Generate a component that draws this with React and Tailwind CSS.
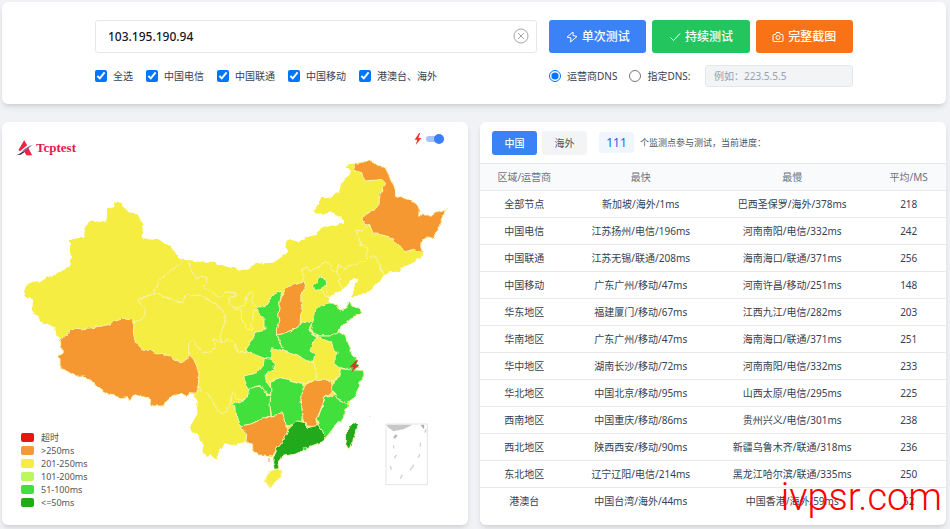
import { useState } from 'react';

const BORDER = '#f8f3b0';
const YELLOW = '#f6ed42';
const ORANGE = '#f69833';
const GREEN = '#42e03c';
const DARK = '#23a91a';

const rows = [
  ['全部节点', '新加坡/海外/1ms', '巴西圣保罗/海外/378ms', 218],
  ['中国电信', '江苏扬州/电信/196ms', '河南南阳/电信/332ms', 242],
  ['中国联通', '江苏无锡/联通/208ms', '海南海口/联通/371ms', 256],
  ['中国移动', '广东广州/移动/47ms', '河南许昌/移动/251ms', 148],
  ['华东地区', '福建厦门/移动/67ms', '江西九江/电信/282ms', 203],
  ['华南地区', '广东广州/移动/47ms', '海南海口/联通/371ms', 251],
  ['华中地区', '湖南长沙/移动/72ms', '河南南阳/电信/332ms', 233],
  ['华北地区', '中国北京/移动/95ms', '山西太原/电信/295ms', 225],
  ['西南地区', '中国重庆/移动/86ms', '贵州兴义/电信/301ms', 238],
  ['西北地区', '陕西西安/移动/90ms', '新疆乌鲁木齐/联通/318ms', 236],
  ['东北地区', '辽宁辽阳/电信/214ms', '黑龙江哈尔滨/联通/335ms', 250],
  ['港澳台', '中国台湾/海外/44ms', '中国香港/海外/59ms', 52],
];

const legend = [
  { label: '超时', color: 'bg-[#e8160f]' },
  { label: '>250ms', color: 'bg-[#f69833]' },
  { label: '201-250ms', color: 'bg-[#f6ed42]' },
  { label: '101-200ms', color: 'bg-[#bdf75c]' },
  { label: '51-100ms', color: 'bg-[#42e03c]' },
  { label: '<=50ms', color: 'bg-[#23a91a]' },
];

const carriers = ['全选', '中国电信', '中国联通', '中国移动', '港澳台、海外'];

const mainland =
  '343,607 365,607 367,620 388,639 412,643 418,657 430,670 427,690 425,713 440,719 480,723 500,735 520,745 527,763 542,781 570,783 600,787 640,787 655,793 680,802 700,806 715,815 735,810 770,793 820,790 840,777 865,757 857,740 858,725 868,720 895,727 912,723 915,715 948,707 962,690 990,680 1028,673 1030,663 1015,648 995,638 980,643 945,642 942,635 958,607 965,590 980,597 1017,581 1022,560 1035,538 1050,525 1052,515 1040,508 1037,503 1050,495 1067,492 1105,485 1120,490 1130,498 1152,500 1162,517 1175,545 1187,570 1190,592 1205,595 1235,603 1252,617 1258,630 1256,647 1295,647 1310,638 1340,628 1330,645 1315,690 1302,718 1285,713 1265,723 1262,740 1267,760 1263,778 1250,777 1243,787 1230,795 1205,805 1200,818 1185,817 1170,815 1155,830 1130,853 1110,868 1095,885 1080,886 1060,895 1053,892 1062,875 1062,865 1075,842 1070,835 1057,837 1040,860 1025,870 1015,880 995,885 987,892 990,910 1012,913 1020,935 1035,930 1050,905 1055,920 1085,928 1087,945 1060,952 1040,970 1022,985 1017,998 1035,1010 1042,1025 1052,1048 1055,1065 1072,1085 1075,1100 1065,1112 1090,1113 1092,1128 1080,1150 1075,1170 1065,1192 1050,1205 1045,1220 1035,1240 1025,1265 1005,1280 990,1300 975,1318 960,1330 940,1338 920,1345 905,1355 885,1365 855,1370 840,1380 833,1390 837,1405 823,1407 818,1390 820,1372 800,1368 775,1367 758,1355 758,1335 738,1327 710,1335 690,1338 670,1335 655,1360 652,1377 640,1375 632,1365 620,1370 610,1355 607,1335 600,1325 592,1298 572,1300 572,1280 583,1260 592,1245 592,1200 583,1190 570,1180 560,1195 545,1185 520,1188 500,1205 485,1220 457,1220 450,1200 430,1192 410,1185 398,1190 388,1210 385,1192 360,1195 330,1187 310,1175 290,1162 280,1150 250,1130 225,1130 200,1115 180,1100 180,1078 172,1068 187,1060 185,1045 177,1025 185,1012 170,1010 165,985 145,975 120,965 115,950 95,940 105,942 98,935 98,900 80,895 72,880 78,860 110,845 118,850 140,835 175,820 208,803 210,785 217,775 213,755 213,730 205,723 240,713 255,715 252,705 260,675 265,662 300,668 320,663 322,630 343,623';

// Borders between provinces that share the same colour
const borders = [
  '545,785 525,808 510,815 495,832 475,842 468,865 458,885 415,900 420,913 432,925 435,945 428,960 402,968',
  '458,885 480,883 495,893 510,900 545,910 557,885 575,890 600,887 620,900 650,917 668,935 678,970 660,1015 665,1030 637,1020 650,1040 635,1060 610,1058 590,1038 580,1022 567,1030 565,1055 568,1067',
  '565,788 572,810 590,840 605,830 620,835 620,850 607,860 640,880 655,895 680,878 705,880 705,890 690,895 690,915 705,927 735,920 740,890 755,877 760,890 753,905 775,920',
  '705,927 724,935 728,960 740,985 755,995 762,985',
  '775,930 760,935 762,955 748,975 755,995',
  '660,1015 670,1030 680,1018 700,1027 705,1042 710,1058 740,1060',
  '595,1160 605,1180 610,1170 625,1185 640,1205 650,1230 665,1243 680,1235 690,1205 700,1175 708,1182 710,1200 735,1200',
  '908,842 910,805 922,802 927,815 952,805 980,788 990,797 990,810 1010,820 1018,795 1030,810 1065,793 1102,780 1100,745 1080,738 1077,715 1068,693 1090,695 1100,683',
  '1102,780 1118,767 1130,775 1135,790 1150,832',
  '1010,820 1025,840 1014,842 1025,868',
  '967,868 980,857 980,875 987,892 970,890 967,868',
  '815,1110 795,1125 812,1145 840,1135 865,1140 908,1152 940,1145 950,1130 945,1105 940,1085 925,1088',
  '940,1145 965,1143 990,1142 1000,1145 1015,1135 1022,1110',
];

const provinces = [
  { name: 'tibet', color: ORANGE, points: '185,1012 200,1005 212,988 250,988 290,983 330,975 335,968 370,958 395,962 402,975 400,1000 405,1025 425,1048 460,1057 490,1067 515,1070 520,1082 545,1087 560,1080 568,1067 580,1078 590,1100 597,1120 595,1155 588,1182 570,1180 560,1195 545,1185 520,1188 500,1205 485,1220 457,1220 450,1200 430,1192 410,1185 398,1190 388,1210 385,1192 360,1195 330,1187 310,1175 290,1162 280,1150 250,1130 225,1130 200,1115 180,1100 180,1078 172,1068 187,1060 185,1045 177,1025' },
  { name: 'heilongjiang', color: ORANGE, points: '1067,492 1105,485 1120,490 1130,498 1152,500 1162,517 1175,545 1187,570 1190,592 1205,595 1235,603 1252,617 1258,630 1256,647 1295,647 1310,638 1340,628 1330,645 1315,690 1302,718 1285,713 1265,723 1262,740 1267,760 1240,750 1217,757 1205,742 1187,735 1180,718 1150,707 1120,703 1110,680 1097,675 1087,657 1105,638 1125,630 1137,615 1140,585 1157,552 1145,540 1130,542 1095,545 1085,520 1060,512' },
  { name: 'beijing', color: GREEN, points: '938,858 952,845 955,835 965,832 975,842 977,855 967,868 940,870' },
  { name: 'shaanxi', color: GREEN, points: '845,875 825,883 808,902 795,922 772,923 775,940 795,960 795,992 765,1000 760,1015 752,1030 738,1050 742,1058 775,1070 793,1077 815,1080 815,1045 850,1055 835,1015 832,1000 840,965 835,940' },
  { name: 'henan', color: GREEN, points: '832,1007 885,990 902,972 905,965 938,970 925,995 955,1012 940,1025 930,1055 945,1065 940,1085 925,1088 905,1075 880,1065 850,1055' },
  { name: 'shanxi', color: ORANGE, points: '855,870 870,857 912,845 917,860 903,885 902,905 907,930 902,950 900,975 885,990 832,1007 832,990 840,965 835,940 838,920 845,890' },
  { name: 'shandong', color: GREEN, points: '988,911 965,917 947,933 945,945 938,970 930,995 960,1010 990,1010 1017,998 1022,985 1040,970 1060,952 1087,945 1085,928 1055,920 1050,905 1035,930 1020,935 1012,913' },
  { name: 'jiangsu', color: GREEN, points: '955,1010 990,1010 1017,998 1035,1010 1042,1025 1052,1048 1055,1065 1072,1085 1075,1105 1060,1112 1040,1110 1020,1105 1002,1090 1003,1080 1015,1060 1002,1055 995,1030 970,1020' },
  { name: 'zhejiang', color: GREEN, points: '1022,1108 1040,1110 1060,1112 1090,1113 1092,1128 1080,1150 1075,1170 1065,1192 1050,1205 1040,1210 1015,1200 1005,1185 995,1165 1000,1145 1015,1135' },
  { name: 'fujian', color: GREEN, points: '1005,1185 1015,1200 1040,1210 1045,1220 1035,1240 1025,1265 1005,1280 990,1300 975,1318 968,1300 955,1280 952,1260 965,1225 975,1195' },
  { name: 'jiangxi', color: ORANGE, points: '912,1160 940,1145 965,1143 990,1142 997,1175 975,1195 962,1230 952,1260 945,1282 918,1280 910,1255 905,1225 902,1190 910,1182' },
  { name: 'hunan', color: GREEN, points: '812,1145 840,1135 865,1140 895,1150 908,1152 910,1182 902,1190 905,1225 910,1258 885,1275 855,1280 850,1260 848,1240 815,1250 810,1220 812,1190' },
  { name: 'guizhou', color: GREEN, points: '695,1215 735,1200 745,1180 750,1165 785,1160 800,1185 812,1190 810,1220 813,1248 785,1260 750,1275 720,1280 710,1255 708,1225' },
  { name: 'chongqing', color: GREEN, points: '815,1080 793,1077 790,1095 770,1120 732,1130 735,1155 745,1170 780,1158 800,1182 812,1188 812,1165 798,1145 795,1125 825,1110 820,1090' },
  { name: 'guangxi', color: ORANGE, points: '720,1280 750,1275 785,1260 815,1250 848,1240 855,1275 865,1295 850,1325 830,1350 818,1370 800,1368 775,1367 758,1355 758,1335 738,1327 740,1305 725,1290' },
  { name: 'guangdong', color: DARK, points: '865,1290 890,1265 920,1270 920,1285 955,1278 968,1295 975,1318 960,1330 940,1338 920,1345 905,1355 885,1365 855,1370 840,1380 833,1390 837,1405 823,1407 818,1390 820,1372 830,1350 850,1325' },
  { name: 'hainan', color: YELLOW, points: '810,1415 840,1407 847,1415 840,1435 825,1452 812,1462 797,1452 798,1435' },
  { name: 'taiwan', color: DARK, points: '1065,1267 1072,1275 1065,1305 1048,1352 1035,1332 1037,1310 1050,1280' },
];

function ChinaMap() {
  return (
    <svg viewBox="60 470 1290 1000" className="block w-full" role="img" aria-label="China">
      <defs>
        <filter id="coast" x="-2%" y="-2%" width="104%" height="104%">
          <feTurbulence type="fractalNoise" baseFrequency="0.05" numOctaves="2" seed="4" result="noise" />
          <feDisplacementMap in="SourceGraphic" in2="noise" scale="12" xChannelSelector="R" yChannelSelector="G" />
        </filter>
      </defs>
      <g filter="url(#coast)" strokeLinejoin="round">
        <polygon points={mainland} fill={YELLOW} />
        {borders.map((points) => (
          <polyline key={points} points={points} fill="none" stroke={BORDER} strokeWidth="3" />
        ))}
        {provinces.map((p) => (
          <polygon key={p.name} points={p.points} fill={p.color} stroke={BORDER} strokeWidth="3" />
        ))}
        <circle cx="912" cy="1348" r="6" fill={GREEN} stroke="#b5efae" strokeWidth="3" />
        <path d="M807 1376v12" stroke={ORANGE} strokeWidth="3" />
      </g>
      <path d="M1069 1084l-18 18h11l-6 14 20-18h-11l8-14z" fill="#e8352c" stroke="#b8402c" strokeWidth="2" />
      {/* South China Sea inset */}
      <g fill="none" stroke="#e4e4e4" strokeWidth="3">
        <rect x="1158" y="1274" width="124" height="182" />
        <path d="M1160 1276h78l-28 14-30 6-16-12z" fill="#c8c8c8" stroke="none" />
        <path d="M1264 1278h7v9z" fill="#aaa" stroke="#aaa" />
        <path d="M1182 1316l8-9" stroke="#b5b5b5" strokeWidth="7" />
        <path d="M1279 1290l-5 10M1261 1330v12M1260 1364l-5 11M1242 1396l-12 17M1207 1426l-6 12M1171 1400l3 11M1183 1376l7-9M1180 1338l2 9" stroke="#d2d2d2" strokeWidth="4" />
        <path d="M1108 1251h3" stroke="#ccc" />
      </g>
    </svg>
  );
}

function BoltIcon() {
  return (
    <svg viewBox="0 0 24 24" className="size-3" fill="none" stroke="currentColor" strokeWidth="2" strokeLinejoin="round">
      <path d="M14 2 2 12l8 2-1 8 13-11-8-2z" />
    </svg>
  );
}

function CheckIcon() {
  return (
    <svg viewBox="0 0 24 24" className="size-3" fill="none" stroke="currentColor" strokeWidth="2">
      <path d="m3 13 6 6L22 5" />
    </svg>
  );
}

function CameraIcon() {
  return (
    <svg viewBox="0 0 24 24" className="size-3" fill="none" stroke="currentColor" strokeWidth="2" strokeLinejoin="round">
      <path d="M4 7h3l2-4h6l2 4h3q2 0 2 2v10q0 2-2 2H4q-2 0-2-2V9q0-2 2-2z" />
      <circle cx="12" cy="13" r="4" />
    </svg>
  );
}

function Logo() {
  return (
    <a href="#" className="flex items-center gap-[3px] font-['Liberation_Serif',serif] text-[13px] leading-4 font-bold text-[#e5174f]">
      <svg viewBox="0 0 51 48" className="h-4 w-[18px]">
        <path d="M26 1 35 16 13 34 9 30z" fill="#ee2340" />
        <path d="M37 21 50 46H33L25 33z" fill="#ee2340" />
        <path d="M0 46C17 43 30 24 51 15 38 22 29 38 15 44z" fill="#35205f" />
        <path d="M20 34C30 24 38 19 51 15 39 22 33 30 25 37z" fill="#b45a9c" />
      </svg>
      Tcptest
    </a>
  );
}

function SearchCard() {
  const [target, setTarget] = useState('103.195.190.94');
  const [dns, setDns] = useState('isp');

  const button = 'flex h-[33px] flex-1 cursor-pointer items-center justify-center gap-1 rounded-[3px] text-xs font-medium text-white';

  return (
    <section className="rounded-md bg-white px-4 pt-[18px] pb-[17px] shadow-md">
      <form className="mx-auto flex max-w-[758px] gap-3" onSubmit={(e) => e.preventDefault()}>
        <div className="flex-1">
          <div className="relative">
            <input
              aria-label="测试目标"
              value={target}
              onChange={(e) => setTarget(e.target.value)}
              className="h-[33px] w-full rounded-[3px] border border-gray-200 px-3 text-xs font-medium text-gray-900 outline-none"
            />
            <button type="button" aria-label="清空" onClick={() => setTarget('')} className="absolute top-2 right-2 text-[#a3a6ad]">
              <svg viewBox="0 0 16 16" className="size-4" fill="none" stroke="currentColor">
                <circle cx="8" cy="8" r="7" />
                <path d="m5 5 6 6m0-6-6 6" />
              </svg>
            </button>
          </div>
          <div className="mt-3 flex h-[22px] items-center gap-[13px]">
            {carriers.map((name) => (
              <label key={name} className="flex items-center gap-[6px] whitespace-nowrap">
                <input type="checkbox" defaultChecked className="size-3 accent-[#0075ff]" />
                {name}
              </label>
            ))}
          </div>
        </div>
        <div className="w-[304px]">
          <div className="flex gap-[6px]">
            <button type="submit" className={`${button} bg-[#3b82f6]`}>
              <BoltIcon />
              单次测试
            </button>
            <button type="button" className={`${button} bg-[#22c55e]`}>
              <CheckIcon />
              持续测试
            </button>
            <button type="button" className={`${button} bg-[#f97316]`}>
              <CameraIcon />
              完整截图
            </button>
          </div>
          <div className="mt-3 flex items-center gap-3">
            <label className="flex items-center gap-[6px] whitespace-nowrap">
              <input type="radio" name="dns" checked={dns === 'isp'} onChange={() => setDns('isp')} className="size-3 accent-[#0075ff]" />
              运营商DNS
            </label>
            <label className="flex items-center gap-[6px] whitespace-nowrap">
              <input type="radio" name="dns" checked={dns === 'custom'} onChange={() => setDns('custom')} className="size-3 accent-[#0075ff]" />
              指定DNS:
            </label>
            <input
              aria-label="DNS"
              disabled={dns !== 'custom'}
              placeholder="例如：223.5.5.5"
              className="ml-auto h-[22px] w-[148px] rounded-[3px] border border-gray-200 bg-gray-100 px-2 placeholder:text-gray-400"
            />
          </div>
        </div>
      </form>
    </section>
  );
}

function MapCard() {
  return (
    <section className="relative rounded-md bg-white shadow-md">
      <div className="flex h-[34px] items-end justify-between pr-6 pl-[13px]">
        <Logo />
        <label className="flex items-center gap-1 self-center">
          <svg viewBox="0 0 20 32" className="h-3 w-2">
            <path d="M13 0 1 18h7L4 32 19 13h-8l5-13z" fill="#f2302f" />
          </svg>
          <input
            type="checkbox"
            aria-label="闪电"
            defaultChecked
            className="relative h-[6px] w-[18px] appearance-none rounded-full bg-[#a6c4fb] before:absolute before:-top-[2px] before:right-0 before:size-[10px] before:rounded-full before:bg-[#3b7ff5]"
          />
        </label>
      </div>
      <div className="px-[18px]">
        <ChinaMap />
      </div>
      <ul className="absolute bottom-4 left-[19px] text-[9px] leading-[13px] text-[#555]">
        {legend.map((item) => (
          <li key={item.label} className="flex items-center gap-[7px]">
            <span className={`h-[9px] w-[13px] rounded-[2px] ${item.color}`} />
            {item.label}
          </li>
        ))}
      </ul>
    </section>
  );
}

function ResultCard() {
  return (
    <section className="relative rounded-md bg-white pb-[10px] shadow-md">
      <div className="flex h-[41px] items-center px-3">
        <button type="button" className="h-6 w-[45px] rounded-[3px] bg-[#3b82f6] text-[10px] font-medium text-white">
          中国
        </button>
        <button type="button" className="ml-[5px] h-6 w-[45px] rounded-[3px] bg-gray-100 text-[10px] text-gray-600">
          海外
        </button>
        <span className="ml-3 h-[21px] w-[35px] rounded-[3px] bg-[#eff6ff] text-center text-xs leading-[21px] text-[#2563eb]">111</span>
        <span className="ml-[6px] text-[9px] text-gray-600">个监测点参与测试，当前进度：</span>
      </div>
      <table className="w-full table-fixed text-center">
        <thead>
          <tr className="h-[27px] border-y border-[#e8eaed] bg-[#f9fafb] text-gray-500">
            <th className="w-[19%] font-normal">区域/运营商</th>
            <th className="w-[31%] font-normal">最快</th>
            <th className="w-[34%] font-normal">最慢</th>
            <th className="w-[16%] font-normal">平均/MS</th>
          </tr>
        </thead>
        <tbody>
          {rows.map(([region, fastest, slowest, avg]) => (
            <tr key={region} className="h-[27px] border-b border-[#e8eaed] whitespace-nowrap last:border-b-0">
              <td>{region}</td>
              <td>{fastest}</td>
              <td>{slowest}</td>
              <td>{avg}</td>
            </tr>
          ))}
        </tbody>
      </table>
      <p className="pointer-events-none absolute right-1 bottom-2 font-['Roboto',sans-serif] text-[38px] leading-10 text-[#ff0000] font-light">ivpsr.com</p>
    </section>
  );
}

export default function App() {
  return (
    <main className="min-h-screen bg-[#f1f2f5] pt-[2px] pr-1 pb-[3px] pl-[2px] font-['Noto_Sans','Noto_Sans_CJK_SC',sans-serif] text-[10px] leading-4 text-gray-700">
      <SearchCard />
      <div className="mt-[18px] grid grid-cols-2 gap-3">
        <MapCard />
        <ResultCard />
      </div>
    </main>
  );
}
